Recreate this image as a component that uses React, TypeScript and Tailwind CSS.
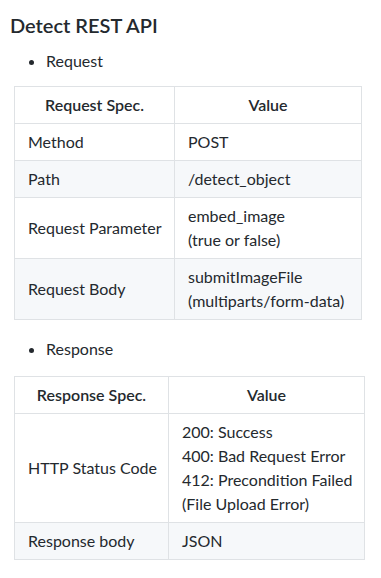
const requestRows = [
  { spec: "Method", value: ["POST"] },
  { spec: "Path", value: ["/detect_object"] },
  { spec: "Request Parameter", value: ["embed_image", "(true or false)"] },
  { spec: "Request Body", value: ["submitImageFile", "(multiparts/form-data)"] },
];

const responseRows = [
  {
    spec: "HTTP Status Code",
    value: [
      "200: Success",
      "400: Bad Request Error",
      "412: Precondition Failed",
      "(File Upload Error)",
    ],
  },
  { spec: "Response body", value: ["JSON"] },
];

type Row = { spec: string; value: string[] };

const SpecTable = ({
  title,
  rows,
  tableWidth,
  firstCol,
}: {
  title: string;
  rows: Row[];
  tableWidth: string;
  firstCol: string;
}) => {
  return (
    <table className={`ml-[4px] table-fixed border-collapse ${tableWidth}`}>
      <thead>
        <tr className="bg-white">
          <th
            className={`whitespace-nowrap border border-[#dfe2e5] px-[13px] py-[6px] text-center font-semibold leading-6 ${firstCol}`}
          >
            {title}
          </th>
          <th className="whitespace-nowrap border border-[#dfe2e5] px-[13px] py-[6px] text-center font-semibold leading-6">
            Value
          </th>
        </tr>
      </thead>
      <tbody>
        {rows.map((row, i) => (
          <tr key={row.spec} className={i % 2 === 1 ? "bg-[#f6f8fa]" : "bg-white"}>
            <td className="whitespace-nowrap border border-[#dfe2e5] px-[13px] py-[6px] leading-6">
              {row.spec}
            </td>
            <td className="whitespace-nowrap border border-[#dfe2e5] px-[13px] py-[6px] leading-6">
              {row.value.map((line) => (
                <div key={line}>{line}</div>
              ))}
            </td>
          </tr>
        ))}
      </tbody>
    </table>
  );
};

const App = () => {
  return (
    <div className="min-h-screen bg-white pl-[10px] pt-[10px] font-['Lato','Liberation_Sans',sans-serif] text-[16px] text-[#24292e]">
      <h3 className="text-[20px] font-semibold leading-[30px]">Detect REST API</h3>

      <ul className="mt-[9px] list-disc pl-[36px]">
        <li className="leading-6">Request</li>
      </ul>

      <div className="mt-[13px]">
        <SpecTable
          title="Request Spec."
          rows={requestRows}
          tableWidth="w-[348px]"
          firstCol="w-[160px]"
        />
      </div>

      <ul className="mt-[17px] list-disc pl-[36px]">
        <li className="leading-6">Response</li>
      </ul>

      <div className="mt-[15px]">
        <SpecTable
          title="Response Spec."
          rows={responseRows}
          tableWidth="w-[351px]"
          firstCol="w-[154px]"
        />
      </div>
    </div>
  );
};

export default App;
